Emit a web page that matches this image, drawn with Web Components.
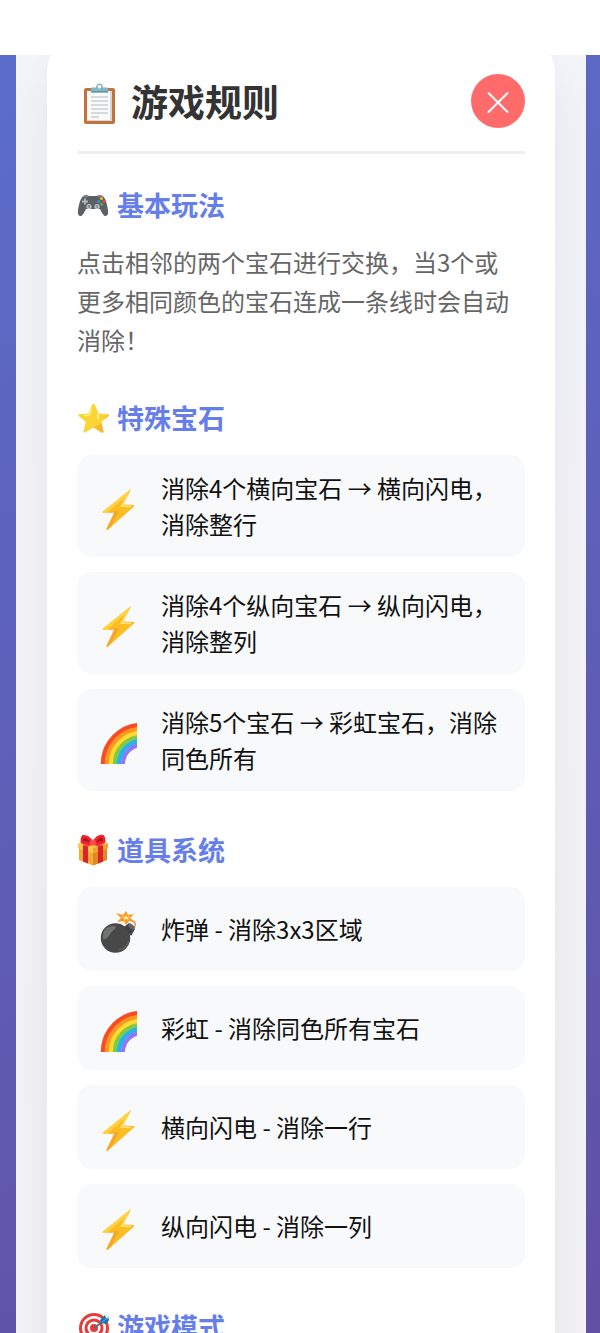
<!DOCTYPE html>
<html lang="zh-CN">
<head>
<meta charset="UTF-8">
<meta name="viewport" content="width=device-width, initial-scale=1">
<title>游戏规则</title>
<style>
    body {
        margin: 0;
        font-family: "Noto Sans CJK SC", "Noto Sans", sans-serif;
        font-size: 24px;
        color: #111;
        background: #fff;
    }
</style>
</head>
<body>
<game-screen>
    <rules-dialog>
        <game-icon slot="icon" name="clipboard"></game-icon>
        <span slot="title">游戏规则</span>

        <rules-section>
            <game-icon slot="icon" name="gamepad"></game-icon>
            <span slot="title">基本玩法</span>
            <rules-text>点击相邻的两个宝石进行交换，当3个或更多相同颜色的宝石连成一条线时会自动消除！</rules-text>
        </rules-section>

        <rules-section>
            <game-icon slot="icon" name="star"></game-icon>
            <span slot="title">特殊宝石</span>
            <rules-list>
                <rules-item icon="bolt">消除4个横向宝石 → 横向闪电，消除整行</rules-item>
                <rules-item icon="bolt">消除4个纵向宝石 → 纵向闪电，消除整列</rules-item>
                <rules-item icon="rainbow">消除5个宝石 → 彩虹宝石，消除同色所有</rules-item>
            </rules-list>
        </rules-section>

        <rules-section>
            <game-icon slot="icon" name="gift"></game-icon>
            <span slot="title">道具系统</span>
            <rules-list>
                <rules-item icon="bomb">炸弹 - 消除3x3区域</rules-item>
                <rules-item icon="rainbow">彩虹 - 消除同色所有宝石</rules-item>
                <rules-item icon="bolt">横向闪电 - 消除一行</rules-item>
                <rules-item icon="bolt">纵向闪电 - 消除一列</rules-item>
            </rules-list>
        </rules-section>

        <rules-section>
            <game-icon slot="icon" name="target"></game-icon>
            <span slot="title">游戏模式</span>
        </rules-section>
    </rules-dialog>
</game-screen>

<script>
// width, height and drawing of every icon
const ICONS = {
    clipboard: [46, 46, `
        <rect x="7" y="10" width="31" height="36" rx="2" fill="#c0733c"/>
        <rect x="10" y="13" width="25" height="30" fill="#fafafa"/>
        <path d="M35 13v30H10v-1h23V13z" fill="#d5d8dc"/>
        <path d="M14 19h17M14 23h17M14 27h17M14 31h17M14 35h17M14 39h8" stroke="#b4b9c0" stroke-width="1"/>
        <path d="M14 14.500v-4q0-1 1-1h4q.5-4 3.500-4t3.500 4h4q1 0 1 1v4z" fill="#82b5c4"/>
        <circle cx="22.500" cy="8.800" r="1.800" fill="#fff"/>
        <path d="M14 13h17v1.500H14z" fill="#5e98aa"/>`],
    gamepad: [32, 32, `
        <path d="M7 7q2-2 5 0h8q3-2 5 0 3 1 4.500 7 2 8 1.500 11-1.500 3-4 1.500-2-2-4-6.500H9q-2 4.500-4 6.500-3 1.500-4-1.500-.5-4 1.500-11Q4 8 7 7z" fill="#5b6064"/>
        <path d="M6 8q2-2 5 0M21 8q3-2 5 0" fill="none" stroke="#80868a" stroke-width="1.500"/>
        <path d="M8 9.500v6M5 12.500h6" stroke="#aeb4b7" stroke-width="2"/>
        <circle cx="12" cy="17.500" r="2.600" fill="#c0c5c8"/>
        <circle cx="20" cy="17.500" r="2.600" fill="#c0c5c8"/>
        <circle cx="12" cy="17.500" r="1.400" fill="#8b9195"/>
        <circle cx="20" cy="17.500" r="1.400" fill="#8b9195"/>
        <circle cx="24.500" cy="9.500" r="1.600" fill="#f3b526"/>
        <circle cx="27" cy="12.500" r="1.600" fill="#ed4b3d"/>
        <circle cx="24.500" cy="15.300" r="1.600" fill="#51ab58"/>
        <circle cx="21.800" cy="12.500" r="1.600" fill="#3693d0"/>`],
    star: [32, 32, `
        <path d="M16.500 1.800q.9 0 1.300 1l3.700 8.600 9.500.8q1.300.4.400 1.700l-7.200 6 2.300 9.500q0 1.800-1.700 1.100l-8.300-5-8.300 5q-1.700.6-1.600-1.200l2.200-9.400-7.200-6q-.9-1.300.4-1.700l9.500-.8L15.200 2.800q.4-1 1.300-1z" fill="#fcd535"/>
        <path d="M31 12.200q1.300.4.400 1.700l-7.200 6 2.300 9.500q0 1.800-1.700 1.100l-8.300-5 5.600-2.500z" fill="#f5b72b"/>
        <path d="M14.500 8l-2 5-5 .8" fill="none" stroke="#fff07a" stroke-width="1.500" stroke-linecap="round"/>
        <path d="M20.500 12.500l1 4" stroke="#fff3a0" stroke-width="1.500" stroke-linecap="round"/>`],
    gift: [32, 32, `
        <path d="M2 13l14-3 14 3v13l-14 5.500L2 26z" fill="#f4ac36"/>
        <path d="M16 18l14-4v12l-14 5.500z" fill="#dc8b24"/>
        <path d="M1 9.500L15 6l16 3.500v5L16 19 1 14.500z" fill="#ffc848"/>
        <path d="M16 14l15-4.500v5L16 19z" fill="#eea235"/>
        <path d="M6 11l5 1.500v17L6 27.500zM21 12.500l5-1.500v16.500l-5 2z" fill="#dc232c"/>
        <path d="M6 11l14-4 5 1-14 4.500zM26 11L12 7 8 8l13 4.500z" fill="#f73b3e"/>
        <path d="M16 10Q7 12 4 9q-1.500-5 1.500-8 6-1 10.500 6Q20-.5 26.500 1q3 3 1.500 8-4 3-12 1z" fill="#ef242c"/>
        <path d="M6 7q0-3 2-3.500 3 1 5 4.500zM26 7q0-3-2-3.500-3 1-5 4.500z" fill="#a91520"/>
        <circle cx="16" cy="8.500" r="3" fill="#ff4b49"/>`],
    target: [32, 32, `
        <circle cx="17" cy="17" r="15" fill="#e53b3b"/>
        <circle cx="17" cy="17" r="12" fill="#fff"/>
        <circle cx="17" cy="17" r="9.500" fill="#e53b3b"/>
        <circle cx="17" cy="17" r="6.500" fill="#fff"/>
        <circle cx="17" cy="17" r="4" fill="#e53b3b"/>
        <path d="M17 17l10-7" stroke="#487588" stroke-width="1.800"/>
        <path d="M23 9l5-5 1 3 4 1-4 5-5-1z" fill="#1976b5"/>
        <path d="M25 11l7-5" stroke="#4eb2e5" stroke-width="1"/>`],
    bolt: [42, 48, `
        <path d="M34 7L6 29.500q-1 1 .5 1.200l10.800-.2L9.500 47q0 1.500 1.500.5l26-23q1-1.400-.5-1.500l-10-.5z" fill="#fcbd22"/>
        <path d="M34 7L6 29.500q-1 1 .5 1.200L10 30.600 31 13z" fill="#ffd23e"/>
        <path d="M17.300 30.500L9.500 47q0 1.500 1.500.5L14.500 44l7.500-15.500-12 2z" fill="#f8a62a"/>
        <path d="M30.500 14l-6 10 9.500.5" fill="none" stroke="#ffe580" stroke-width="1.500"/>`],
    rainbow: [42, 48, `
        <svg x="0" y="0" width="40" height="48" viewBox="0 0 40 48">
            <circle cx="45" cy="48" r="39" fill="none" stroke="#fa4b22" stroke-width="4.500"/>
            <circle cx="45" cy="48" r="35" fill="none" stroke="#ff961f" stroke-width="4.500"/>
            <circle cx="45" cy="48" r="31" fill="none" stroke="#ffdc2c" stroke-width="4.500"/>
            <circle cx="45" cy="48" r="27" fill="none" stroke="#83c947" stroke-width="4.500"/>
            <circle cx="45" cy="48" r="23" fill="none" stroke="#21b3ed" stroke-width="4.500"/>
            <circle cx="45" cy="48" r="19" fill="none" stroke="#9275f4" stroke-width="4"/>
        </svg>`],
    bomb: [42, 48, `
        <path d="M32 25q8-2 6-7-2-3-8-4" fill="none" stroke="#d89c50" stroke-width="1.500"/>
        <path d="M29 6l2 4 6-1-4 4 5 4-6-1-3 4-2-4-7 1 4-4-5-5 7 2z" fill="#f99827"/>
        <path d="M29 10l1 2 3-1-2 2 1 2-3-1-2 1v-2l-3-2 4 1z" fill="#fff18b"/>
        <circle cx="18.500" cy="33" r="14.700" fill="#484848"/>
        <path d="M27 22l5-4 6 6-4 7z" fill="#424242"/>
        <ellipse cx="34.500" cy="21.500" rx="2" ry="4" transform="rotate(-45 34.500 21.500)" fill="#656565"/>
        <path d="M6 34q-1-12 10-13 5 0 1 4-2 1-4 4-3 6-7 5z" fill="#727272"/>
        <path d="M32 36q-3 8-11 9" fill="none" stroke="#5c5c5c" stroke-width="1.500"/>`],
    close: [26, 26, `
        <path d="M3.500 5l19 19M22.500 5l-19 19" stroke="#fff" stroke-width="2" stroke-linecap="round"/>`]
};

class GameIcon extends HTMLElement {
    constructor() {
        super();
        this.attachShadow({ mode: 'open' });
    }

    connectedCallback() {
        const [width, height, drawing] = ICONS[this.getAttribute('name')];
        this.shadowRoot.innerHTML = /*html*/`
            <style>
                :host {
                    display: block;
                    flex: none;
                }
                svg {
                    display: block;
                }
            </style>
            <svg width="${width}" height="${height}" viewBox="0 0 ${width} ${height}" aria-hidden="true">${drawing}</svg>
        `;
    }
}

class GameScreen extends HTMLElement {
    constructor() {
        super();
        this.attachShadow({ mode: 'open' }).innerHTML = /*html*/`
            <style>
                :host {
                    display: flex;
                    flex-direction: column;
                    height: 100vh;
                    overflow: hidden;
                }
                .status {
                    flex: none;
                    height: 55px;
                    background: #fff;
                }
                .scene {
                    flex: 1;
                    min-height: 0;
                    display: flex;
                    padding: 0 14px 0 16px;
                    background: linear-gradient(160deg, #5b6dca, #6150a4);
                }
                .panel {
                    flex: 1;
                    min-width: 0;
                    padding: 0 31px;
                    overflow: hidden;
                    background: linear-gradient(#f4f5fb, #f5f4f8);
                }
            </style>
            <div class="status"></div>
            <div class="scene">
                <div class="panel"><slot></slot></div>
            </div>
        `;
    }
}

class RulesDialog extends HTMLElement {
    constructor() {
        super();
        this.attachShadow({ mode: 'open' }).innerHTML = /*html*/`
            <style>
                /* the sheet is scrolled a little way under the status bar */
                :host {
                    display: block;
                    margin-top: -14px;
                    padding: 33px 30px;
                    border-radius: 30px;
                    background: #fff;
                    box-shadow: 0 30px 60px rgba(0, 0, 0, 0.08);
                }
                header {
                    display: flex;
                    align-items: center;
                    justify-content: space-between;
                    padding-bottom: 23px;
                    border-bottom: 3px solid #f0f0f0;
                }
                h2 {
                    display: flex;
                    align-items: center;
                    gap: 8px;
                    margin: 0;
                    font-size: 37px;
                    line-height: 54px;
                    color: #333;
                }
                button {
                    display: flex;
                    align-items: center;
                    justify-content: center;
                    width: 54px;
                    height: 54px;
                    padding: 0;
                    border: none;
                    border-radius: 50%;
                    background: #ff6b6b;
                    cursor: pointer;
                }
                .content {
                    display: flex;
                    flex-direction: column;
                    gap: 39px;
                    padding-top: 31px;
                }
            </style>
            <header>
                <h2><slot name="icon"></slot><slot name="title"></slot></h2>
                <button type="button" aria-label="关闭"><game-icon name="close"></game-icon></button>
            </header>
            <div class="content"><slot></slot></div>
        `;
    }
}

class RulesSection extends HTMLElement {
    constructor() {
        super();
        this.attachShadow({ mode: 'open' }).innerHTML = /*html*/`
            <style>
                :host {
                    display: block;
                }
                h3 {
                    display: flex;
                    align-items: center;
                    gap: 8px;
                    margin: 0 0 17px;
                    font-size: 27px;
                    line-height: 40px;
                    color: #667eea;
                }
            </style>
            <h3><slot name="icon"></slot><slot name="title"></slot></h3>
            <slot></slot>
        `;
    }
}

class RulesText extends HTMLElement {
    constructor() {
        super();
        this.attachShadow({ mode: 'open' }).innerHTML = /*html*/`
            <style>
                :host {
                    display: block;
                }
                p {
                    margin: 0;
                    padding-right: 8px;
                    line-height: 39px;
                    color: #666;
                }
            </style>
            <p><slot></slot></p>
        `;
    }
}

class RulesList extends HTMLElement {
    constructor() {
        super();
        this.attachShadow({ mode: 'open' }).innerHTML = /*html*/`
            <style>
                :host {
                    display: flex;
                    flex-direction: column;
                    gap: 15px;
                }
            </style>
            <slot></slot>
        `;
    }

    connectedCallback() {
        this.setAttribute('role', 'list');
    }
}

class RulesItem extends HTMLElement {
    constructor() {
        super();
        this.attachShadow({ mode: 'open' });
    }

    connectedCallback() {
        this.setAttribute('role', 'listitem');
        this.shadowRoot.innerHTML = /*html*/`
            <style>
                :host {
                    display: flex;
                    align-items: center;
                    gap: 22px;
                    box-sizing: border-box;
                    min-height: 84px;
                    padding: 15px 20px;
                    border-radius: 15px;
                    background: #f8f9fb;
                    line-height: 36px;
                }
            </style>
            <game-icon name="${this.getAttribute('icon')}"></game-icon>
            <div><slot></slot></div>
        `;
    }
}

customElements.define('game-icon', GameIcon);
customElements.define('game-screen', GameScreen);
customElements.define('rules-dialog', RulesDialog);
customElements.define('rules-section', RulesSection);
customElements.define('rules-text', RulesText);
customElements.define('rules-list', RulesList);
customElements.define('rules-item', RulesItem);
</script>
</body>
</html>
